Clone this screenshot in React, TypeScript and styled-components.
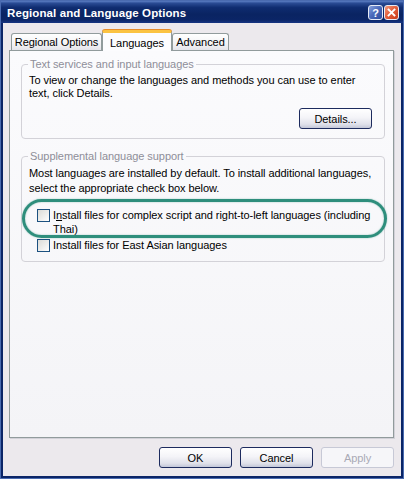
import React from 'react';
import styled, { createGlobalStyle } from 'styled-components';

const GlobalStyle = createGlobalStyle`
  html, body { margin: 0; padding: 0; background: #ffffff; }
  body { font-family: 'Liberation Sans', Arial, sans-serif; font-size: 11px; color: #000; letter-spacing: -0.06px; }
  * { box-sizing: border-box; }
`;

const Window = styled.div`
  position: relative;
  width: 404px;
  height: 479px;
  display: flex;
  flex-direction: column;
  border: 1px solid #4a6bb0;
  background: #0b2567;
`;

const TitleBar = styled.div`
  height: 22px;
  display: flex;
  align-items: center;
  padding: 1px 4px 0 6px;
  background: linear-gradient(180deg, #5c7fc4 0%, #2a4b94 10%, #0f2c70 30%, #0a2462 60%, #0b2566 85%, #163583 100%);
`;

const Title = styled.div`
  flex: 1;
  color: #ffffff;
  font-weight: bold;
  font-size: 11.5px;
  letter-spacing: 0.1px;
`;

const CaptionButton = styled.div<{ $close?: boolean }>`
  width: 15px;
  height: 15px;
  margin-left: 1px;
  border: 1px solid #e6ebf6;
  border-radius: 3px;
  display: flex;
  align-items: center;
  justify-content: center;
  color: #ffffff;
  font-weight: bold;
  font-size: 11px;
  background: ${p => (p.$close
    ? 'linear-gradient(135deg, #f29a7c 0%, #e2603e 45%, #c93a18 100%)'
    : 'linear-gradient(135deg, #8aa3dc 0%, #4d6cbc 45%, #2c4b9c 100%)')};
`;

const Body = styled.div`
  flex: 1;
  display: flex;
  flex-direction: column;
  border: 2px solid #0b2567;
  border-top: none;
  background: #ece9ed;
  padding: 7px 7px 8px 6px;
`;

const TabStrip = styled.div`
  height: 20px;
  display: flex;
  align-items: flex-end;
  padding-left: 2px;
`;

const Tab = styled.div<{ $active?: boolean; $w: number }>`
  width: ${p => p.$w}px;
  height: ${p => (p.$active ? 21 : 17)}px;
  margin-bottom: ${p => (p.$active ? -1 : 0)}px;
  position: relative;
  z-index: ${p => (p.$active ? 1 : 0)};
  display: flex;
  align-items: center;
  justify-content: center;
  padding-top: ${p => (p.$active ? 1 : 0)}px;
  border: 1px solid #919b9c;
  border-bottom: none;
  border-radius: 3px 3px 0 0;
  ${p => (p.$active
    ? `border-top: 3px solid #fbc342;
       box-shadow: 0 -1px 0 #e68b2c;
       background: #fcfcfe;`
    : `background: linear-gradient(180deg, #ffffff 0%, #f3f3f5 60%, #e4e4ea 100%);`)}
`;

const Panel = styled.div`
  height: 388px;
  display: flex;
  flex-direction: column;
  padding: 7px 8px 0 11px;
  border: 1px solid #919b9c;
  background: linear-gradient(180deg, #fbfbfd 0%, #f4f4f7 100%);
  box-shadow: 1px 1px 0 #d2d1d8;
`;

const Group = styled.fieldset<{ $gap?: number }>`
  margin: ${p => p.$gap ?? 0}px 0 0 0;
  padding: 3px 1px 9px 7px;
  border: 1px solid #d3d2d8;
  border-radius: 4px;
  min-width: 0;
`;

const Legend = styled.legend`
  padding: 0 2px;
  margin-left: -1px;
  color: #8e8e99;
  line-height: 13px;
`;

const Text = styled.p<{ $lh: number }>`
  margin: 0;
  padding-right: 10px;
  line-height: ${p => p.$lh}px;
`;

const RightRow = styled.div`
  display: flex;
  justify-content: flex-end;
  margin: 8px 11px 0 0;
`;

const Button = styled.div<{ $disabled?: boolean }>`
  width: 73px;
  height: 21px;
  display: flex;
  align-items: center;
  justify-content: center;
  border-radius: 3px;
  border: 1px solid ${p => (p.$disabled ? '#c7c9d6' : '#1d2b5e')};
  color: ${p => (p.$disabled ? '#a9a9b5' : '#000')};
  background: ${p => (p.$disabled
    ? '#f6f6f9'
    : 'linear-gradient(180deg, #ffffff 0%, #f4f4f8 45%, #e0e1ea 80%, #c3c7d8 100%)')};
`;

const CheckRow = styled.div<{ $gap: number }>`
  display: flex;
  align-items: flex-start;
  margin: ${p => p.$gap}px 0 0 8px;
`;

const Box = styled.div`
  width: 13px;
  height: 13px;
  flex: none;
  margin-top: 1px;
  border: 1px solid #1c5180;
  background: linear-gradient(135deg, #dcdcd7 0%, #f0f0ee 60%, #ffffff 100%);
`;

const Label = styled.div`
  width: 326px;
  margin-left: 3px;
  line-height: 14px;
`;

const U = styled.span`
  text-decoration: underline;
`;

const Footer = styled.div`
  margin-top: 9px;
  display: flex;
  justify-content: flex-end;
  gap: 8px;
`;

const Highlight = styled.div`
  position: absolute;
  left: 21px;
  top: 198px;
  width: 365px;
  height: 39px;
  border: 3px solid #2e8e7c;
  border-radius: 20px;
  box-shadow: 0 0 1.5px rgba(46, 142, 124, 0.6), inset 0 0 1.5px rgba(46, 142, 124, 0.6);
  pointer-events: none;
`;

const CloseIcon = () => (
  <svg width="9" height="9" viewBox="0 0 9 9">
    <path d="M1.5 1.5 L7.5 7.5 M7.5 1.5 L1.5 7.5" stroke="#fff" strokeWidth="1.8" strokeLinecap="square" />
  </svg>
);

export default function App() {
  return (
    <>
      <GlobalStyle />
      <Window>
        <TitleBar>
          <Title>Regional and Language Options</Title>
          <CaptionButton>?</CaptionButton>
          <CaptionButton $close><CloseIcon /></CaptionButton>
        </TitleBar>
        <Body>
          <TabStrip>
            <Tab $w={91}>Regional Options</Tab>
            <Tab $w={70} $active>Languages</Tab>
            <Tab $w={57}>Advanced</Tab>
          </TabStrip>
          <Panel>
            <Group>
              <Legend>Text services and input languages</Legend>
              <Text $lh={13}>
                To view or change the languages and methods you can use to enter text, click Details.
              </Text>
              <RightRow>
                <Button>Details...</Button>
              </RightRow>
            </Group>
            <Group $gap={11}>
              <Legend>Supplemental language support</Legend>
              <Text $lh={15}>
                Most languages are installed by default. To install additional languages, select the appropriate check box below.
              </Text>
              <CheckRow $gap={12}>
                <Box />
                <Label>I<U>n</U>stall files for complex script and right-to-left languages (including Thai)</Label>
              </CheckRow>
              <CheckRow $gap={2}>
                <Box />
                <Label>Install files for East Asian languages</Label>
              </CheckRow>
            </Group>
          </Panel>
          <Footer>
            <Button>OK</Button>
            <Button>Cancel</Button>
            <Button $disabled>Apply</Button>
          </Footer>
        </Body>
        <Highlight />
      </Window>
    </>
  );
}
